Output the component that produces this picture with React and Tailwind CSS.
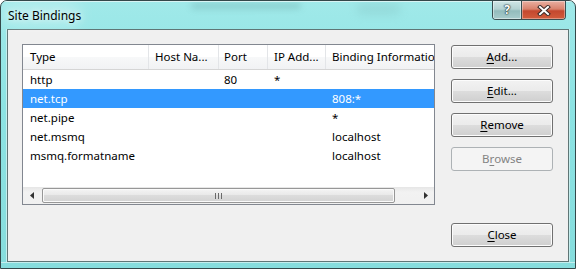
import React from "react";

const GRID = "grid grid-cols-[126px_70px_49px_58px_1fr]";

const rows = [
  ["http", "", "80", "*", ""],
  ["net.tcp", "", "", "", "808:*"],
  ["net.pipe", "", "", "", "*"],
  ["net.msmq", "", "", "", "localhost"],
  ["msmq.formatname", "", "", "", "localhost"],
];

function Btn({ children, disabled }) {
  if (disabled) {
    return (
      <div className="h-[24px] w-[102px] rounded-[3px] border border-[#adb2b5] bg-[#f4f4f4] text-[#838383] flex items-center justify-center">
        {children}
      </div>
    );
  }
  return (
    <div className="h-[24px] w-[102px] rounded-[3px] border border-[#707070] bg-[linear-gradient(to_bottom,#f2f2f2_0%,#ebebeb_50%,#dddddd_50%,#cfcfcf_100%)] shadow-[inset_0_0_0_1px_#fcfcfc] flex items-center justify-center">
      {children}
    </div>
  );
}

function U({ children }) {
  return <span className="underline underline-offset-[2px] decoration-[1px]">{children}</span>;
}

export default function App() {
  const pad = ["pl-[7px]", "pl-[6px]", "pl-[5px]", "pl-[6px]", "pl-[6px]"];
  return (
    <div className="relative w-[576px] h-[269px] overflow-hidden rounded-t-[7px] border border-[#34484a] bg-[linear-gradient(to_bottom,#a0e9e9_0%,#8ce3e3_40%,#86dddd_100%)] flex flex-col font-['Noto_Sans',sans-serif] text-[11.5px] leading-none text-black">
      {/* decorative blur in glass */}
      <div className="absolute left-[190px] top-[2px] w-[110px] h-[6px] rounded-full bg-[#6aa8a8] opacity-40 blur-[3px]" />
      <div className="absolute left-[355px] top-[2px] w-[45px] h-[12px] rounded-full bg-[#78b4b4] opacity-25 blur-[5px]" />
      <div className="absolute left-[0px] top-[0px] w-[80px] h-[26px] rounded-full bg-white opacity-25 blur-[8px]" />

      {/* title bar */}
      <div className="relative h-[28px] shrink-0 flex items-center pl-[7px] border-t border-[#d8f4f4]">
        <span className="text-[12px] text-black [text-shadow:0_0_6px_rgba(255,255,255,0.95)]">Site Bindings</span>
        <div className="absolute right-[9px] top-[-1px] flex h-[19px] rounded-b-[4px] border border-t-0 border-[#3a4e50] overflow-hidden">
          <div className="w-[29px] h-full flex items-center justify-center border-r border-[#3a4e50] bg-[linear-gradient(to_bottom,#cfe6e6_0%,#b4d2d2_45%,#93bcbc_55%,#a8cccc_100%)] shadow-[inset_0_0_0_1px_rgba(255,255,255,0.45)]">
            <span className="text-[12px] font-bold text-white [text-shadow:0_0_1px_#233,0_0_1px_#233,0_0_2px_#233]">?</span>
          </div>
          <div className="w-[43px] h-full flex items-center justify-center bg-[linear-gradient(to_bottom,#eab0a2_0%,#d9826c_45%,#c4482f_55%,#d25c3c_100%)] shadow-[inset_0_0_0_1px_rgba(255,255,255,0.35)]">
            <svg width="14" height="11" viewBox="0 0 14 11">
              <path d="M3 2 L11 9 M11 2 L3 9" stroke="#3b2a28" strokeWidth="4" strokeLinecap="square" />
              <path d="M3 2 L11 9 M11 2 L3 9" stroke="#ffffff" strokeWidth="2" strokeLinecap="square" />
            </svg>
          </div>
        </div>
      </div>

      {/* middle */}
      <div className="flex h-[233px] shrink-0">
        <div className="w-[6px] shrink-0 border-r border-[#c4eeee]" />
        {/* client area */}
        <div className="w-[562px] shrink-0 border border-[#5f7676] bg-[#f0f0f0] flex pt-[14px] pl-[14px] pr-[15px] pb-[14px]">
          {/* list */}
          <div className="w-[413px] h-[161px] shrink-0 border border-[#828790] bg-white flex flex-col">
            <div className={`${GRID} h-[25px] border-b border-[#d5d5d5] bg-[linear-gradient(to_bottom,#ffffff_0%,#ffffff_50%,#f7f8f9_50%,#f1f2f4_100%)]`}>
              {["Type", "Host Na...", "Port", "IP Add...", "Binding Information"].map((h, i) => (
                <div key={i} className={`${pad[i]} flex items-center overflow-hidden whitespace-nowrap ${i < 4 ? "border-r border-[#e3e5e8]" : ""}`}>
                  {h}
                </div>
              ))}
            </div>
            {rows.map((r, ri) => (
              <div key={ri} className={`${GRID} h-[19px] ${ri === 1 ? "bg-[#3399ff] text-white" : ""}`}>
                {r.map((c, ci) => (
                  <div key={ci} className={`${pad[ci]} flex items-center overflow-hidden whitespace-nowrap`}>
                    {c}
                  </div>
                ))}
              </div>
            ))}
            <div className="flex-1" />
            {/* horizontal scrollbar */}
            <div className="h-[17px] flex bg-[linear-gradient(to_bottom,#e6e6e6_0%,#f2f2f2_30%,#f0f0f0_100%)]">
              <div className="w-[17px] flex items-center justify-center">
                <svg width="4" height="7" viewBox="0 0 4 7"><path d="M4 0 L0 3.5 L4 7 Z" fill="#333" /></svg>
              </div>
              <div className="flex-1 flex py-[1px] pl-[2px]">
                <div className="w-[353px] h-full rounded-[2px] border border-[#979797] bg-[linear-gradient(to_bottom,#f4f4f4_0%,#e8e8e8_50%,#dcdcdc_50%,#d2d2d2_100%)] shadow-[inset_0_0_0_1px_#fafafa] flex items-center justify-center gap-[2px]">
                  <div className="w-[1px] h-[6px] bg-[#6a6a6a]" />
                  <div className="w-[1px] h-[6px] bg-[#6a6a6a]" />
                  <div className="w-[1px] h-[6px] bg-[#6a6a6a]" />
                </div>
              </div>
              <div className="w-[17px] flex items-center justify-center">
                <svg width="4" height="7" viewBox="0 0 4 7"><path d="M0 0 L4 3.5 L0 7 Z" fill="#333" /></svg>
              </div>
            </div>
          </div>
          {/* buttons */}
          <div className="ml-[16px] w-[102px] flex flex-col pt-[1px]">
            <div className="flex flex-col gap-[10px]">
              <Btn><U>A</U>dd...</Btn>
              <Btn><U>E</U>dit...</Btn>
              <Btn><U>R</U>emove</Btn>
              <Btn disabled>B<U>r</U>owse</Btn>
            </div>
            <div className="mt-auto">
              <Btn><U>C</U>lose</Btn>
            </div>
          </div>
        </div>
        <div className="w-[6px] shrink-0 border-l border-[#c4eeee]" />
      </div>
      {/* bottom frame */}
      <div className="flex-1 border-t border-[#c4eeee]" />
    </div>
  );
}
